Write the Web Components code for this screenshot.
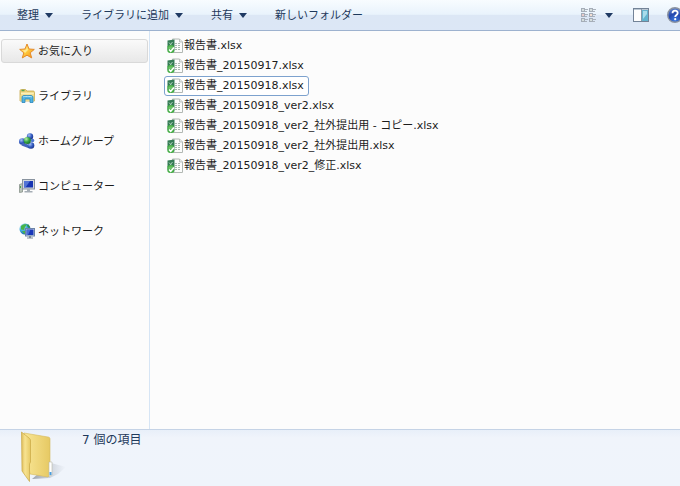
<!DOCTYPE html>
<html lang="ja">
<head>
<meta charset="utf-8">
<title>エクスプローラー</title>
<style>
html, body { height: 100%; margin: 0; }
body { font-family: "DejaVu Sans", "Noto Sans CJK JP", sans-serif; font-size: 11px; line-height: 20px; color: #1c1c1c; background: #fcfcfc; overflow: hidden; }
</style>
</head>
<body>
<explorer-window>
  <tool-bar slot="toolbar">
    <tool-button menu>整理</tool-button>
    <tool-button menu>ライブラリに追加</tool-button>
    <tool-button menu>共有</tool-button>
    <tool-button>新しいフォルダー</tool-button>
  </tool-bar>
  <nav-pane slot="nav">
    <nav-item icon="star" selected>お気に入り</nav-item>
    <nav-item icon="library">ライブラリ</nav-item>
    <nav-item icon="homegroup">ホームグループ</nav-item>
    <nav-item icon="computer">コンピューター</nav-item>
    <nav-item icon="network">ネットワーク</nav-item>
  </nav-pane>
  <file-list slot="files">
    <file-item>報告書.xlsx</file-item>
    <file-item>報告書_20150917.xlsx</file-item>
    <file-item focused>報告書_20150918.xlsx</file-item>
    <file-item>報告書_20150918_ver2.xlsx</file-item>
    <file-item>報告書_20150918_ver2_社外提出用 - コピー.xlsx</file-item>
    <file-item>報告書_20150918_ver2_社外提出用.xlsx</file-item>
    <file-item>報告書_20150918_ver2_修正.xlsx</file-item>
  </file-list>
  <details-pane slot="details">7 個の項目</details-pane>
</explorer-window>

<script>
const ICONS = {
  caret: [8, 5, `<path d="M0 0h8L4 5z" fill="#1f3a63"/>`],
  views: [15, 14, [0, 5, 10].map((y, r) => [0, 8].map((x, c) =>
    `<rect x="${x + .5}" y="${y + .5}" width="3" height="3" fill="#f8fafb" stroke="#a5adb8"/><rect x="${x + 1.5}" y="${y + 1.5}" width="1" height="1" fill="${r === 1 ? (c ? '#dd8f5c' : '#b8453c') : '#6f8f86'}"/><path d="M${x + 4} ${y + 1.5}h3M${x + 4} ${y + 3.5}h2" stroke="#aab2bc"/>`).join('')).join('')],
  preview: [16, 14, `<rect x=".5" y=".5" width="15" height="13" fill="#fdfdfd" stroke="#738397"/><path d="M1 1.5h14" stroke="#bcc8d4"/><rect x="9" y="2" width="6" height="11" fill="#63b4cf"/><path d="M10 3h4v3l-4 5z" fill="#a8dceb"/><path d="M8.5 1v12" stroke="#8798a8"/>`],
  help: [16, 16, `<defs><radialGradient id="g" cx=".5" cy=".85" r=".8"><stop stop-color="#3e7be0"/><stop offset=".55" stop-color="#2347ad"/><stop offset="1" stop-color="#5b7fcb"/></radialGradient></defs><circle cx="8" cy="8" r="7.3" fill="url(#g)" stroke="#8b929f" stroke-width="1.4"/><path d="M5.5 6.3C5.5 2.8 10.7 3 10.7 6c0 2-2.5 1.9-2.5 4" fill="none" stroke="#fff" stroke-width="1.8"/><circle cx="8.2" cy="12.2" r="1.1" fill="#fff"/>`],
  star: [16, 16, `<defs><linearGradient id="g" x1="0" y1="0" x2="1" y2="1"><stop stop-color="#fff4a8"/><stop offset=".5" stop-color="#ffcb3c"/><stop offset="1" stop-color="#f08a1c"/></linearGradient></defs><path d="M8 1l2 5 5.3.4-4.1 3.4 1.5 5.1L8 12.2l-4.7 2.7 1.5-5.1L.7 6.4 6 6z" fill="url(#g)" stroke="#e58a28" stroke-linejoin="round"/><path d="M8 4l1 3-3 3-2-2.5L7 7z" fill="#fff6b8" opacity=".7"/>`],
  library: [16, 16, `<path d="M1 3c0-1 .5-1.5 1.500-1.500h4L8 3h6c1 0 1.500.5 1.500 1.500V13H1z" fill="#e9cf75" stroke="#c8a94c" stroke-width=".8"/><path d="M2 4.500h12.800v2H2z" fill="#fbf0b8"/><path d="M2.500 2.500h3" stroke="#5aa552" stroke-width="1.400"/><path d="M1.400 7h13.800v6H1.400z" fill="#f1dc8b"/><path d="M3 14.500V9.500C3 8 4 7.500 5 7.500h7c1.200 0 2 .8 2 2v5h-3V11H6v3.500z" fill="#4fb3e2" stroke="#2a86bd" stroke-width=".8"/><path d="M4 9c.5-.8 8-.8 9 0" stroke="#b7e6f8" fill="none"/>`],
  homegroup: [16, 16, `<defs><radialGradient id="g" cx=".35" cy=".3" r=".8"><stop stop-color="#a9c3f2"/><stop offset=".5" stop-color="#375fc4"/><stop offset="1" stop-color="#142b7e"/></radialGradient><radialGradient id="h" cx=".35" cy=".3" r=".8"><stop stop-color="#b8efac"/><stop offset=".5" stop-color="#35a645"/><stop offset="1" stop-color="#136427"/></radialGradient></defs><circle cx="11" cy="3.500" r="3.200" fill="url(#g)"/><circle cx="3.300" cy="8.500" r="3.300" fill="url(#g)"/><path d="M3 11l8 3" stroke="#4366bd" stroke-width="3"/><circle cx="12" cy="12.500" r="3.300" fill="url(#g)"/><circle cx="13.500" cy="7.500" r="1.800" fill="#4d78cf"/><circle cx="8.300" cy="7.500" r="3.600" fill="url(#h)"/>`],
  computer: [16, 16, `<path d="M.5 6.500l3-1V14l-3 .5z" fill="#bac4ba" stroke="#7d877f" stroke-width=".7"/><path d="M1.500 8v2" stroke="#48a448"/><rect x="3.500" y="1.500" width="12" height="9.500" fill="#d3d8dd" stroke="#89939f"/><rect x="5" y="3" width="9" height="6.500" fill="#1735b2"/><path d="M5 3h6L6.500 9.500H5z" fill="#6788e0" opacity=".75"/><path d="M8 11h3v2h2.500v1.500h-8V13H8z" fill="#a5adb5"/>`],
  network: [16, 16, `<defs><radialGradient id="g" cx=".3" cy=".3" r=".8"><stop stop-color="#c8f3ff"/><stop offset=".5" stop-color="#36a5d8"/><stop offset="1" stop-color="#155294"/></radialGradient></defs><circle cx="6" cy="6" r="5.500" fill="url(#g)"/><path d="M2 3c2-2 4-2 6-1.500L6 4l-1 3-3-.5zM3 8l4 0v3l-2-.5z" fill="#48b449"/><path d="M9 1l2 3-1 1-2-2z" fill="#2c9445"/><rect x="6.500" y="5.500" width="9" height="7.500" fill="#c8d3e0" stroke="#6b83a8"/><rect x="7.500" y="6.500" width="7" height="5.500" fill="#1937ba"/><path d="M7.500 6.500h4L9 12H7.500z" fill="#5e84e2" opacity=".7"/><path d="M10 13h2v1.500h2v1H8v-1h2z" fill="#7e8b99"/>`],
  xlsx: [16, 16, `<path d="M5.500 1h7l3 3v10.500h-10z" fill="#fcfdfc" stroke="#b2b8b4"/><path d="M12.500 1v3h3" fill="#e5e9e7" stroke="#b2b8b4" stroke-width=".8"/><path d="M8 5.500h6M8 7.500h6M8 9.500h6M8 11.500h6" stroke="#a9b9af" stroke-dasharray="2 1"/><path d="M.5 2.500L7.500 1.500v12l-7-1z" fill="#347b54"/><path d="M2 4.500l3.500 4M5.500 4L2 8.500" stroke="#a9cdb7"/><path d="M.5 8.500c1-1.500 4-2 6.500-.5v6c-2 2-5.500 1-6.500-.5z" fill="#45ad46"/><path d="M1.500 9c1.500-1 3-1 5 0v2h-5z" fill="#83cf7b" opacity=".6"/><path d="M2 11.500l1.700 1.800L7 9.500" fill="none" stroke="#fff" stroke-width="1.500"/>`],
  folder: [48, 52, `<defs><linearGradient id="g"><stop stop-color="#f9e696"/><stop offset="1" stop-color="#e6c963"/></linearGradient><linearGradient id="h"><stop stop-color="#dfbd5c"/><stop offset=".4" stop-color="#f7e391"/><stop offset="1" stop-color="#e7c964"/></linearGradient><linearGradient id="s"><stop stop-color="#888f99" stop-opacity=".8"/><stop offset="1" stop-color="#a3abb7" stop-opacity="0"/></linearGradient></defs><path d="M31 32L46 36 38 43 30 47 12 48z" fill="url(#s)"/><path d="M4 2L28 6c1.500 0 2 1 2 2v36l-2 2L10 43z" fill="url(#g)" stroke="#d5b95d" stroke-width=".6"/><path d="M29 31h3v13l-3 1z" fill="#fff" stroke="#b8b8a7" stroke-width=".6"/><path d="M29.500 41h2v3h-2z" fill="#4a9dde"/><path d="M1.500 1L9 7c1 1 1.500 1 1.500 3v21l-1 2v17.500L2 40z" fill="url(#h)" stroke="#c8a745" stroke-width=".7"/>`]
};

function define(name, html, setup) {
  const template = document.createElement('template');
  template.innerHTML = html;
  customElements.define(name, class extends HTMLElement {
    constructor() {
      super();
      this.attachShadow({ mode: 'open' }).append(template.content.cloneNode(true));
    }
    connectedCallback() { if (setup) setup(this, this.shadowRoot); }
  });
}

define('ui-icon', `<style>:host{display:block;flex:none}svg{display:block}</style><div></div>`, (el, root) => {
  const [w, h, body] = ICONS[el.getAttribute('name')];
  root.querySelector('div').innerHTML = `<svg width="${w}" height="${h}" viewBox="0 0 ${w} ${h}" fill="none" aria-hidden="true">${body}</svg>`;
});

define('tool-button', `<style>
:host{display:block;flex:none}
button{display:flex;align-items:center;gap:6px;padding:1px 0 0;border:0;background:none;font:inherit;color:#1e395b;white-space:nowrap}
ui-icon{display:none}
:host([menu]) ui-icon{display:block}
</style><button type="button"><slot></slot><ui-icon name="caret"></ui-icon></button>`);

define('tool-bar', `<style>
:host{display:flex;align-items:center;justify-content:space-between;height:30px;padding-left:17px;overflow:hidden;border-bottom:1px solid #9db2cf;background:linear-gradient(#f8fcff,#e9f3fc 48%,#dce7f5 50%,#dce7f6)}
.group{display:flex;align-items:center;gap:28px}
.tools{display:flex;align-items:center;flex:none;margin-right:-3px}
button{display:block;padding:0;border:0;background:none}
.views{margin-right:9px}.caret{margin-right:20px}.preview{margin-right:18px}
</style>
<div class="group"><slot></slot></div>
<div class="tools">
<button class="views" type="button" aria-label="表示方法の変更"><ui-icon name="views"></ui-icon></button>
<button class="caret" type="button" aria-label="その他のオプション"><ui-icon name="caret"></ui-icon></button>
<button class="preview" type="button" aria-label="プレビュー ウィンドウ"><ui-icon name="preview"></ui-icon></button>
<button type="button" aria-label="ヘルプ"><ui-icon name="help"></ui-icon></button>
</div>`);

define('nav-item', `<style>
:host{display:block}
a{display:flex;align-items:center;gap:3px;height:22px;padding-left:17px;border:1px solid transparent;border-radius:3px;color:inherit;text-decoration:none;white-space:nowrap}
:host([selected]) a{border-color:#d9d9d9;background:linear-gradient(#fafafa,#e8e8e8)}
.label{padding-top:2px}
</style><a href="#"><span class="icon"></span><span class="label"><slot></slot></span></a>`, (el, root) => {
  const icon = document.createElement('ui-icon');
  icon.setAttribute('name', el.getAttribute('icon'));
  root.querySelector('.icon').replaceChildren(icon);
});

define('nav-pane', `<style>
:host{display:block;border-right:1px solid #d6e5f5}
nav{display:flex;flex-direction:column;gap:21px;padding:8px 1px}
</style><nav><slot></slot></nav>`);

define('file-item', `<style>
:host{display:flex}
button{display:flex;align-items:center;gap:1px;height:20px;padding:0 4px 0 2px;border:1px solid transparent;border-radius:3px;background:none;font:inherit;color:inherit;white-space:nowrap}
:host([focused]) button{border-color:#7da2ce;background:#fff}
</style><button type="button"><ui-icon name="xlsx"></ui-icon><slot></slot></button>`);

define('file-list', `<style>:host{display:flex;flex-direction:column;padding:5px 14px;overflow:hidden}</style><slot></slot>`);

define('details-pane', `<style>
:host{display:flex;gap:14px;height:56px;padding-left:20px;border-top:1px solid #c5d3e6;background:linear-gradient(#e8eff9,#f0f4fb 8px,#eff4fb);font-size:12px;color:#1e395b}
ui-icon{padding-top:1px}
</style><ui-icon name="folder"></ui-icon><span><slot></slot></span>`);

define('explorer-window', `<style>
:host{display:grid;grid-template:auto 1fr auto / 150px 1fr;height:100vh}
slot[name=toolbar]::slotted(*),slot[name=details]::slotted(*){grid-column:1 / -1}
</style><slot name="toolbar"></slot><slot name="nav"></slot><slot name="files"></slot><slot name="details"></slot>`);
</script>
</body>
</html>
